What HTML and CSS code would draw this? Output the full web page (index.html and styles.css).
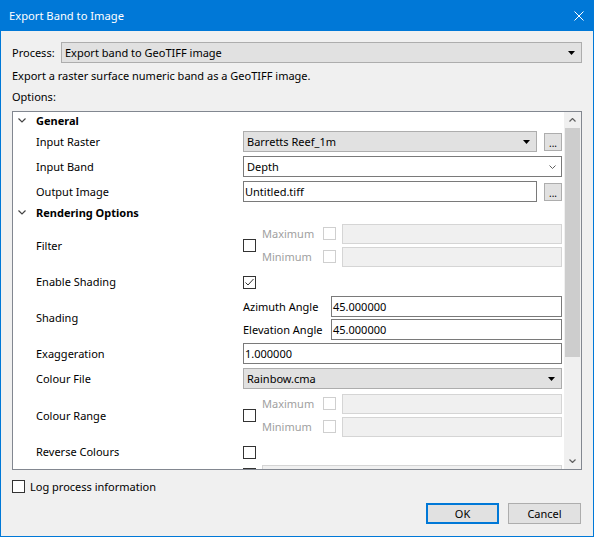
FILE: index.html
```html
<!DOCTYPE html>
<html lang="en">
<head>
  <meta charset="UTF-8" />
  <title>Export Band to Image</title>
  <link rel="stylesheet" href="styles.css">
</head>
<body>
  <div class="dialog">
    <div class="titlebar">
      <span>Export Band to Image</span>
      <svg class="close" width="10" height="10" viewBox="0 0 10 10"><path d="M0.5 0.5L9.5 9.5M9.5 0.5L0.5 9.5" stroke="#fff" stroke-width="1" fill="none"/></svg>
    </div>

    <div class="content">
      <div class="process">
        <span class="process-label">Process:</span>
        <div class="combo"><span>Export band to GeoTIFF image</span><svg class="tri" width="7" height="4" viewBox="0 0 7 4"><path d="M0 0H7L3.5 4Z" fill="#000"/></svg></div>
      </div>
      <div class="line">Export a raster surface numeric band as a GeoTIFF image.</div>
      <div class="line">Options:</div>

      <!-- property grid -->
      <div class="tree">
        <div class="rows">
          <div class="group">
            <svg class="chev" width="8" height="5" viewBox="0 0 8 5"><path d="M0.5 0.5L4 4L7.5 0.5" stroke="#444" stroke-width="1.2" fill="none"/></svg>
            General
          </div>
          <div class="row">
            <div class="label">Input Raster</div>
            <div class="pick">
              <div class="combo"><span>Barretts Reef_1m</span><svg class="tri" width="7" height="4" viewBox="0 0 7 4"><path d="M0 0H7L3.5 4Z" fill="#000"/></svg></div>
              <div class="dots">...</div>
            </div>
          </div>
          <div class="row">
            <div class="label">Input Band</div>
            <div class="combo white"><span>Depth</span><svg width="7" height="4" viewBox="0 0 7 4"><path d="M0.5 0.5L3.5 3.5L6.5 0.5" stroke="#606060" stroke-width="1" fill="none"/></svg></div>
          </div>
          <div class="row">
            <div class="label">Output Image</div>
            <div class="pick">
              <div class="field">Untitled.tiff</div>
              <div class="dots">...</div>
            </div>
          </div>
          <div class="group">
            <svg class="chev" width="8" height="5" viewBox="0 0 8 5"><path d="M0.5 0.5L4 4L7.5 0.5" stroke="#444" stroke-width="1.2" fill="none"/></svg>
            Rendering Options
          </div>
          <div class="row double">
            <div class="label">Filter</div>
            <div class="range">
              <span class="check"></span>
              <div class="range-grid">
                <span>Maximum</span><span class="check disabled"></span><div class="field disabled"></div>
                <span>Minimum</span><span class="check disabled"></span><div class="field disabled"></div>
              </div>
            </div>
          </div>
          <div class="row">
            <div class="label">Enable Shading</div>
            <div><span class="check"><svg width="11" height="11" viewBox="0 0 11 11"><path d="M1.5 5.5L4 8L9.5 2" stroke="#333" stroke-width="1" fill="none"/></svg></span></div>
          </div>
          <div class="row double shading">
            <div class="label">Shading</div>
            <div class="angles">
              <span>Azimuth Angle</span><div class="field">45.000000</div>
              <span>Elevation Angle</span><div class="field">45.000000</div>
            </div>
          </div>
          <div class="row">
            <div class="label">Exaggeration</div>
            <div class="field">1.000000</div>
          </div>
          <div class="row">
            <div class="label">Colour File</div>
            <div class="combo"><span>Rainbow.cma</span><svg class="tri" width="7" height="4" viewBox="0 0 7 4"><path d="M0 0H7L3.5 4Z" fill="#000"/></svg></div>
          </div>
          <div class="row double">
            <div class="label">Colour Range</div>
            <div class="range">
              <span class="check"></span>
              <div class="range-grid">
                <span>Maximum</span><span class="check disabled"></span><div class="field disabled"></div>
                <span>Minimum</span><span class="check disabled"></span><div class="field disabled"></div>
              </div>
            </div>
          </div>
          <div class="row">
            <div class="label">Reverse Colours</div>
            <div><span class="check"></span></div>
          </div>
          <div class="row partial">
            <div class="label"></div>
            <div class="range">
              <span class="check"></span>
              <div class="range-grid single">
                <div class="field disabled"></div>
              </div>
            </div>
          </div>
        </div>

        <div class="scrollbar">
          <div class="arrow"><svg width="7" height="4" viewBox="0 0 7 4"><path d="M0.5 3.5L3.5 0.5L6.5 3.5" stroke="#606060" stroke-width="1.2" fill="none"/></svg></div>
          <div class="thumb"></div>
          <div class="spacer"></div>
          <div class="arrow"><svg width="7" height="4" viewBox="0 0 7 4"><path d="M0.5 0.5L3.5 3.5L6.5 0.5" stroke="#606060" stroke-width="1.2" fill="none"/></svg></div>
        </div>
      </div>

      <div class="log"><span class="check"></span>Log process information</div>

      <div class="buttons">
        <button class="btn default">OK</button>
        <button class="btn">Cancel</button>
      </div>
    </div>
  </div>
</body>
</html>
```

FILE: styles.css
```css
* {
  box-sizing: border-box;
}
body {
  margin: 0;
  font-family: "Noto Sans", sans-serif;
  font-size: 11px;
  color: #000;
  background: #f0f0f0;
}
.dialog {
  width: 594px;
  height: 537px;
  border: 1px solid #0078d7;
  border-top: 0;
  background: #f0f0f0;
  display: flex;
  flex-direction: column;
}
.titlebar {
  height: 31px;
  flex: none;
  background: #0078d7;
  color: #fff;
  font-size: 11.2px;
  display: flex;
  align-items: center;
  justify-content: space-between;
  padding: 0 9px 0 8px;
}
.content {
  flex: 1;
  padding: 11px 11px 0;
  display: flex;
  flex-direction: column;
}
.process {
  display: flex;
  align-items: center;
  height: 21px;
}
.process-label {
  width: 49px;
}
.process .combo {
  flex: 1;
}
.line {
  margin-top: 5px;
  line-height: 16px;
}
.combo {
  height: 21px;
  border: 1px solid #adadad;
  background: #e1e1e1;
  display: flex;
  align-items: center;
  justify-content: space-between;
  padding: 0 6px 0 3px;
}
.combo.white {
  background: #fff;
  border-color: #7a7a7a;
  padding-right: 5px;
}
.tri {
  flex: none;
}
.field {
  height: 21px;
  border: 1px solid #7a7a7a;
  background: #fff;
  padding: 0 1px;
  display: flex;
  align-items: center;
}
.field.disabled {
  height: 20px;
  border-color: #d5d5d5;
  background: #f0f0f0;
}
.check {
  width: 13px;
  height: 13px;
  flex: none;
  display: inline-flex;
  align-items: center;
  justify-content: center;
  border: 1px solid #333;
  background: #fff;
  vertical-align: middle;
}
.check.disabled {
  border-color: #cfcfcf;
}

/* property grid */
.tree {
  margin-top: 6px;
  height: 359px;
  flex: none;
  border: 1px solid #828790;
  background: #fff;
  display: flex;
}
.rows {
  flex: 1;
  overflow: hidden;
}
.group {
  height: 17px;
  display: flex;
  align-items: center;
  padding-left: 5px;
  font-weight: bold;
}
.chev {
  margin-right: 10px;
}
.row {
  display: grid;
  grid-template-columns: 230px 1fr;
  align-items: center;
  height: 25px;
  padding-right: 2px;
}
.row.double {
  height: 48px;
}
.row.double.shading {
  height: 47px;
}
.row.partial {
  align-items: start;
  padding-top: 1px;
}
.row.partial .range {
  align-items: start;
}
.row.partial .check {
  margin-top: 3px;
}
.row .label {
  padding-left: 23px;
}
.pick {
  display: flex;
  align-items: center;
  gap: 7px;
}
.pick .combo,
.pick .field {
  flex: 1;
}
.dots {
  width: 18px;
  height: 18px;
  border: 1px solid #adadad;
  background: #e1e1e1;
  font-size: 10px;
  line-height: 18px;
  text-align: center;
}
.range {
  display: flex;
  align-items: center;
}
.range-grid {
  flex: 1;
  margin-left: 6px;
  display: grid;
  grid-template-columns: 61px 19px 1fr;
  row-gap: 3px;
  align-items: center;
  color: #a0a0a0;
}
.range-grid.single {
  grid-template-columns: 1fr;
}
.angles {
  display: grid;
  grid-template-columns: 88px 1fr;
  row-gap: 2px;
  align-items: center;
}
.scrollbar {
  width: 17px;
  flex: none;
  background: #f0f0f0;
  display: flex;
  flex-direction: column;
}
.arrow {
  height: 16px;
  display: flex;
  align-items: center;
  justify-content: center;
}
.thumb {
  height: 229px;
  margin: 0 1px;
  background: #cdcdcd;
}
.spacer {
  flex: 1;
}

.log {
  margin-top: 10px;
  height: 13px;
  display: flex;
  align-items: center;
  gap: 5px;
}
.buttons {
  margin-top: 10px;
  padding-right: 1px;
  display: flex;
  justify-content: flex-end;
  gap: 9px;
}
.btn {
  width: 73px;
  height: 21px;
  border: 1px solid #adadad;
  background: #e1e1e1;
  font-family: "Noto Sans", sans-serif;
  font-size: 11px;
  padding: 0;
}
.btn.default {
  border: 2px solid #0078d7;
}
```
